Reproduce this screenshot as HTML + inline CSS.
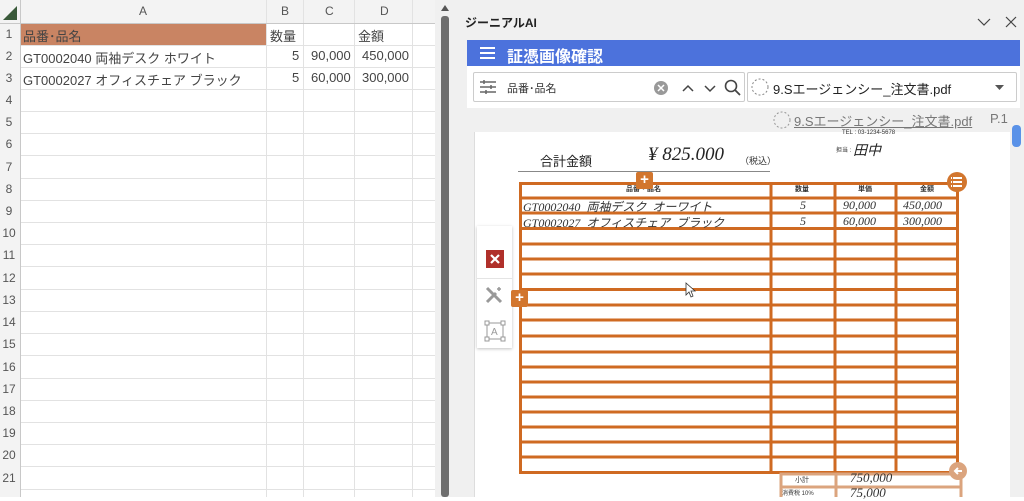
<!DOCTYPE html>
<html><head><meta charset="utf-8"><style>
*{margin:0;padding:0;box-sizing:border-box}
body{width:1024px;height:497px;overflow:hidden;background:#fff;font-family:"Liberation Sans","Noto Sans CJK JP",sans-serif;position:relative}
.a{position:absolute;white-space:nowrap}
.t{font-size:13px;color:#444}
.rh{position:absolute;left:0;width:18px;text-align:center;font-size:12px;color:#555}
.h{font-family:'Liberation Serif',"Noto Sans CJK JP",serif;font-style:italic;color:#333}
</style></head><body>
<!-- Excel -->
<svg class="a" style="left:0;top:0" width="452" height="497">
<rect x="0" y="0" width="452" height="23" fill="#f3f3f3"/>
<rect x="0" y="0" width="20" height="497" fill="#f3f3f3"/>
<polygon points="3,20 17,20 17,6" fill="#3a5a3a"/>
<rect x="20" y="23" width="246" height="22" fill="#c98463"/>
<g stroke="#e2e2e2" stroke-width="1">
<line x1="20" y1="45.5" x2="435" y2="45.5"/><line x1="20" y1="67.5" x2="435" y2="67.5"/><line x1="20" y1="89.5" x2="435" y2="89.5"/><line x1="20" y1="111.5" x2="435" y2="111.5"/><line x1="20" y1="133.5" x2="435" y2="133.5"/><line x1="20" y1="155.5" x2="435" y2="155.5"/><line x1="20" y1="178.5" x2="435" y2="178.5"/><line x1="20" y1="200.5" x2="435" y2="200.5"/><line x1="20" y1="222.5" x2="435" y2="222.5"/><line x1="20" y1="244.5" x2="435" y2="244.5"/><line x1="20" y1="266.5" x2="435" y2="266.5"/><line x1="20" y1="289.5" x2="435" y2="289.5"/><line x1="20" y1="311.5" x2="435" y2="311.5"/><line x1="20" y1="333.5" x2="435" y2="333.5"/><line x1="20" y1="355.5" x2="435" y2="355.5"/><line x1="20" y1="378.5" x2="435" y2="378.5"/><line x1="20" y1="400.5" x2="435" y2="400.5"/><line x1="20" y1="422.5" x2="435" y2="422.5"/><line x1="20" y1="444.5" x2="435" y2="444.5"/><line x1="20" y1="466.5" x2="435" y2="466.5"/><line x1="20" y1="489.5" x2="435" y2="489.5"/>
<line x1="266.5" y1="0" x2="266.5" y2="497"/><line x1="303.5" y1="0" x2="303.5" y2="497"/><line x1="354.5" y1="0" x2="354.5" y2="497"/><line x1="412.5" y1="0" x2="412.5" y2="497"/>
</g>
<line x1="20.5" y1="0" x2="20.5" y2="497" stroke="#c8c8c8"/>
<line x1="0" y1="23.5" x2="435" y2="23.5" stroke="#c8c8c8"/>
<rect x="435" y="0" width="17" height="497" fill="#f0f0f0"/>
<rect x="441" y="16" width="8" height="481" rx="3" fill="#6e6e6e"/>
<polygon points="441,11 449,11 445,5" fill="#555"/>
</svg>
<div class="a" style="left:139px;top:4px;font-size:12px;color:#555">A</div>
<div class="a" style="left:281px;top:4px;font-size:12px;color:#555">B</div>
<div class="a" style="left:325px;top:4px;font-size:12px;color:#555">C</div>
<div class="a" style="left:380px;top:4px;font-size:12px;color:#555">D</div>
<div class="rh" style="top:27px">1</div><div class="rh" style="top:49px">2</div><div class="rh" style="top:71px">3</div><div class="rh" style="top:93px">4</div><div class="rh" style="top:115px">5</div><div class="rh" style="top:137px">6</div><div class="rh" style="top:160px">7</div><div class="rh" style="top:182px">8</div><div class="rh" style="top:204px">9</div><div class="rh" style="top:226px">10</div><div class="rh" style="top:248px">11</div><div class="rh" style="top:271px">12</div><div class="rh" style="top:293px">13</div><div class="rh" style="top:315px">14</div><div class="rh" style="top:337px">15</div><div class="rh" style="top:360px">16</div><div class="rh" style="top:382px">17</div><div class="rh" style="top:404px">18</div><div class="rh" style="top:426px">19</div><div class="rh" style="top:448px">20</div><div class="rh" style="top:471px">21</div>
<div class="a t" style="left:23px;top:26px">品番･品名</div>
<div class="a t" style="left:270px;top:26px">数量</div>
<div class="a t" style="left:358px;top:26px">金額</div>
<div class="a t" style="left:23px;top:48px">GT0002040 両袖デスク ホワイト</div>
<div class="a t" style="left:23px;top:70px">GT0002027 オフィスチェア ブラック</div>
<div class="a t" style="left:292px;top:48px">5</div><div class="a t" style="left:292px;top:70px">5</div>
<div class="a t" style="left:311px;top:48px">90,000</div><div class="a t" style="left:311px;top:70px">60,000</div>
<div class="a t" style="left:362px;top:48px">450,000</div><div class="a t" style="left:362px;top:70px">300,000</div>

<!-- right panel -->
<div class="a" style="left:452px;top:0;width:572px;height:497px;background:#f0f0f0"></div>
<div class="a" style="left:465px;top:14px;font-size:12px;font-weight:bold;color:#222">ジーニアルAI</div>
<svg class="a" style="left:975px;top:15px" width="45" height="14"><path d="M3 4l6 6 6-6" stroke="#444" fill="none" stroke-width="1.2"/><path d="M31 2l10 10M41 2l-10 10" stroke="#444" stroke-width="1.2"/></svg>
<div class="a" style="left:467px;top:40px;width:553px;height:26px;background:#4c72dc"></div>
<svg class="a" style="left:478px;top:46px" width="20" height="14"><path d="M2 2h15M2 7h15M2 12h15" stroke="#fff" stroke-width="2"/></svg>
<div class="a" style="left:507px;top:43px;font-size:16px;color:#fff;font-weight:bold">証憑画像確認</div>
<div class="a" style="left:467px;top:66px;width:553px;height:42px;background:#fff"></div>
<div class="a" style="left:473px;top:72px;width:272px;height:30px;border:1px solid #ccc;border-radius:2px;background:#fff"></div>
<svg class="a" style="left:479px;top:79px" width="18" height="16"><path d="M1 3h16M1 8h16M1 13h16" stroke="#666" stroke-width="1.5"/><path d="M5 1v4M12 6v4M7 11v4" stroke="#666" stroke-width="1.5"/></svg>
<div class="a" style="left:507px;top:80px;font-size:11px;color:#333">品番･品名</div>
<svg class="a" style="left:653px;top:79px" width="95" height="18"><circle cx="8" cy="9" r="7" fill="#999"/><path d="M5 6l6 6M11 6l-6 6" stroke="#fff" stroke-width="1.5"/><path d="M30 12l5-5 5 5" stroke="#444" fill="none" stroke-width="1.5"/><path d="M52 7l5 5 5-5" stroke="#444" fill="none" stroke-width="1.5"/><circle cx="78" cy="7" r="5.5" stroke="#444" fill="none" stroke-width="1.6"/><path d="M82 11l5 5" stroke="#444" stroke-width="1.8"/></svg>
<div class="a" style="left:747px;top:72px;width:270px;height:30px;border:1px solid #ccc;border-radius:2px;background:#fff"></div>
<svg class="a" style="left:750px;top:77px" width="20" height="20"><circle cx="10" cy="10" r="8" stroke="#888" fill="none" stroke-dasharray="2 2"/></svg>
<div class="a" style="left:773px;top:79px;font-size:13px;color:#222">9.Sエージェンシー_注文書.pdf</div>
<svg class="a" style="left:994px;top:84px" width="12" height="8"><path d="M1 1h9l-4.5 5z" fill="#555"/></svg>
<svg class="a" style="left:772px;top:110px" width="20" height="20"><circle cx="10" cy="10" r="8" stroke="#999" fill="none" stroke-dasharray="2 2"/></svg>
<div class="a" style="left:794px;top:111px;font-size:13px;color:#777;text-decoration:underline">9.Sエージェンシー_注文書.pdf</div>
<div class="a" style="left:990px;top:111px;font-size:13px;color:#777">P.1</div>
<div class="a" style="left:474px;top:132px;width:536px;height:365px;background:#fff;border-left:1px solid #ddd"></div>
<div class="a" style="left:1012px;top:125px;width:9px;height:22px;border-radius:4px;background:#5a92e8"></div>
<!-- doc -->
<div class="a" style="left:842px;top:130px;font-size:6px;color:#333">TEL : 03-1234-5678</div>
<div class="a" style="left:836px;top:145px;font-size:6px;color:#333">担当 :</div>
<div class="a h" style="left:853px;top:140px;font-size:14px;color:#222">田中</div>
<div class="a" style="left:540px;top:151px;font-size:13px;color:#222">合計金額</div>
<div class="a h" style="left:648px;top:144px;font-size:19px;color:#222">¥ 825.000</div>
<div class="a" style="left:740px;top:154px;font-size:9px;color:#333">（税込）</div>
<div class="a" style="left:518px;top:171px;width:252px;height:1px;background:#888"></div>
<svg class="a" style="left:515px;top:178px" width="450" height="300">
<g stroke="#cf6a22" stroke-width="3" fill="none">
<rect x="5.5" y="5.5" width="437" height="289"/>
<line x1="256" y1="5" x2="256" y2="295"/><line x1="320" y1="5" x2="320" y2="295"/><line x1="381" y1="5" x2="381" y2="295"/>
<line x1="5" y1="20" x2="443" y2="20"/><line x1="5" y1="35" x2="443" y2="35"/><line x1="5" y1="50.5" x2="443" y2="50.5"/><line x1="5" y1="66" x2="443" y2="66"/><line x1="5" y1="81" x2="443" y2="81"/><line x1="5" y1="96" x2="443" y2="96"/><line x1="5" y1="111.5" x2="443" y2="111.5"/><line x1="5" y1="127" x2="443" y2="127"/><line x1="5" y1="142" x2="443" y2="142"/><line x1="5" y1="158" x2="443" y2="158"/><line x1="5" y1="174" x2="443" y2="174"/><line x1="5" y1="189" x2="443" y2="189"/><line x1="5" y1="204" x2="443" y2="204"/><line x1="5" y1="219" x2="443" y2="219"/><line x1="5" y1="234" x2="443" y2="234"/><line x1="5" y1="249" x2="443" y2="249"/><line x1="5" y1="264" x2="443" y2="264"/><line x1="5" y1="279" x2="443" y2="279"/>
</g></svg>
<div class="a" style="left:626px;top:184px;font-size:7px;font-weight:bold;color:#333">品番・品名</div>
<div class="a" style="left:795px;top:184px;font-size:7px;font-weight:bold;color:#333">数量</div>
<div class="a" style="left:858px;top:184px;font-size:7px;font-weight:bold;color:#333">単価</div>
<div class="a" style="left:920px;top:184px;font-size:7px;font-weight:bold;color:#333">金額</div>
<div class="a h" style="left:523px;top:198px;font-size:12px">GT0002040 &nbsp;両袖デスク &nbsp;オーワイト</div>
<div class="a h" style="left:523px;top:214px;font-size:12px">GT0002027 &nbsp;オフィスチェア &nbsp;ブラック</div>
<div class="a h" style="left:800px;top:198px;font-size:12px">5</div><div class="a h" style="left:800px;top:214px;font-size:12px">5</div>
<div class="a h" style="left:843px;top:198px;font-size:12px">90,000</div><div class="a h" style="left:843px;top:214px;font-size:12px">60,000</div>
<div class="a h" style="left:903px;top:198px;font-size:12px">450,000</div><div class="a h" style="left:903px;top:214px;font-size:12px">300,000</div>
<!-- subtotal -->
<svg class="a" style="left:778px;top:470px" width="186" height="27"><g stroke="#dba47e" stroke-width="3" fill="none"><rect x="3" y="4" width="180" height="30"/><line x1="58" y1="4" x2="58" y2="30"/><line x1="3" y1="17" x2="183" y2="17"/></g></svg>
<div class="a" style="left:795px;top:475px;font-size:7px;color:#333">小計</div>
<div class="a h" style="left:850px;top:470px;font-size:13px">750,000</div>
<div class="a" style="left:782px;top:488px;font-size:6px;color:#333">消費税 10%</div>
<div class="a h" style="left:850px;top:485px;font-size:13px">75,000</div>
<!-- badges -->
<div class="a" style="left:636px;top:172px;width:17px;height:17px;background:#d2762e;border-radius:2px;color:#fff;font-size:15px;font-weight:bold;text-align:center;line-height:16px">+</div>
<svg class="a" style="left:946px;top:171px" width="22" height="22"><circle cx="11" cy="11" r="10" fill="#d2762e"/><path d="M7 7h9M7 11h9M7 15h9" stroke="#fff" stroke-width="2"/><path d="M5 7h1M5 11h1M5 15h1" stroke="#fff" stroke-width="2"/></svg>
<svg class="a" style="left:948px;top:461px" width="20" height="20"><circle cx="10" cy="10" r="9" fill="#dba47e"/><path d="M14 10H7M10 7l-3 3 3 3" stroke="#fff" stroke-width="2" fill="none"/></svg>
<!-- side toolbar -->
<div class="a" style="left:477px;top:226px;width:35px;height:122px;background:#fff;box-shadow:0 1px 3px rgba(0,0,0,.25)"></div>
<div class="a" style="left:477px;top:278px;width:35px;height:1px;background:#e4e4e4"></div>
<svg class="a" style="left:486px;top:250px" width="18" height="18"><rect x="0" y="0" width="18" height="18" fill="#b0302a"/><path d="M5 5l8 8M13 5l-8 8" stroke="#fff" stroke-width="2.2"/></svg>
<svg class="a" style="left:484px;top:285px" width="22" height="20"><path d="M3 3l14 14M3 17l9-9" stroke="#999" stroke-width="3"/><path d="M15 2v4M13 4h4" stroke="#999" stroke-width="1.5"/></svg>
<svg class="a" style="left:484px;top:320px" width="22" height="22"><rect x="3" y="3" width="16" height="16" stroke="#999" fill="none"/><rect x="1" y="1" width="4" height="4" fill="#fff" stroke="#999"/><rect x="17" y="1" width="4" height="4" fill="#fff" stroke="#999"/><rect x="1" y="17" width="4" height="4" fill="#fff" stroke="#999"/><rect x="17" y="17" width="4" height="4" fill="#fff" stroke="#999"/><text x="7" y="15" font-size="10" fill="#999" font-family="Liberation Sans">A</text></svg>
<div class="a" style="left:511px;top:290px;width:17px;height:17px;background:#d2762e;border-radius:2px;color:#fff;font-size:15px;font-weight:bold;text-align:center;line-height:16px">+</div>
<svg class="a" style="left:685px;top:282px" width="12" height="16"><path d="M1 1v12l3-3 2 5 2-1-2-5h4z" fill="#fff" stroke="#333" stroke-width="0.8"/></svg>
</body></html>
